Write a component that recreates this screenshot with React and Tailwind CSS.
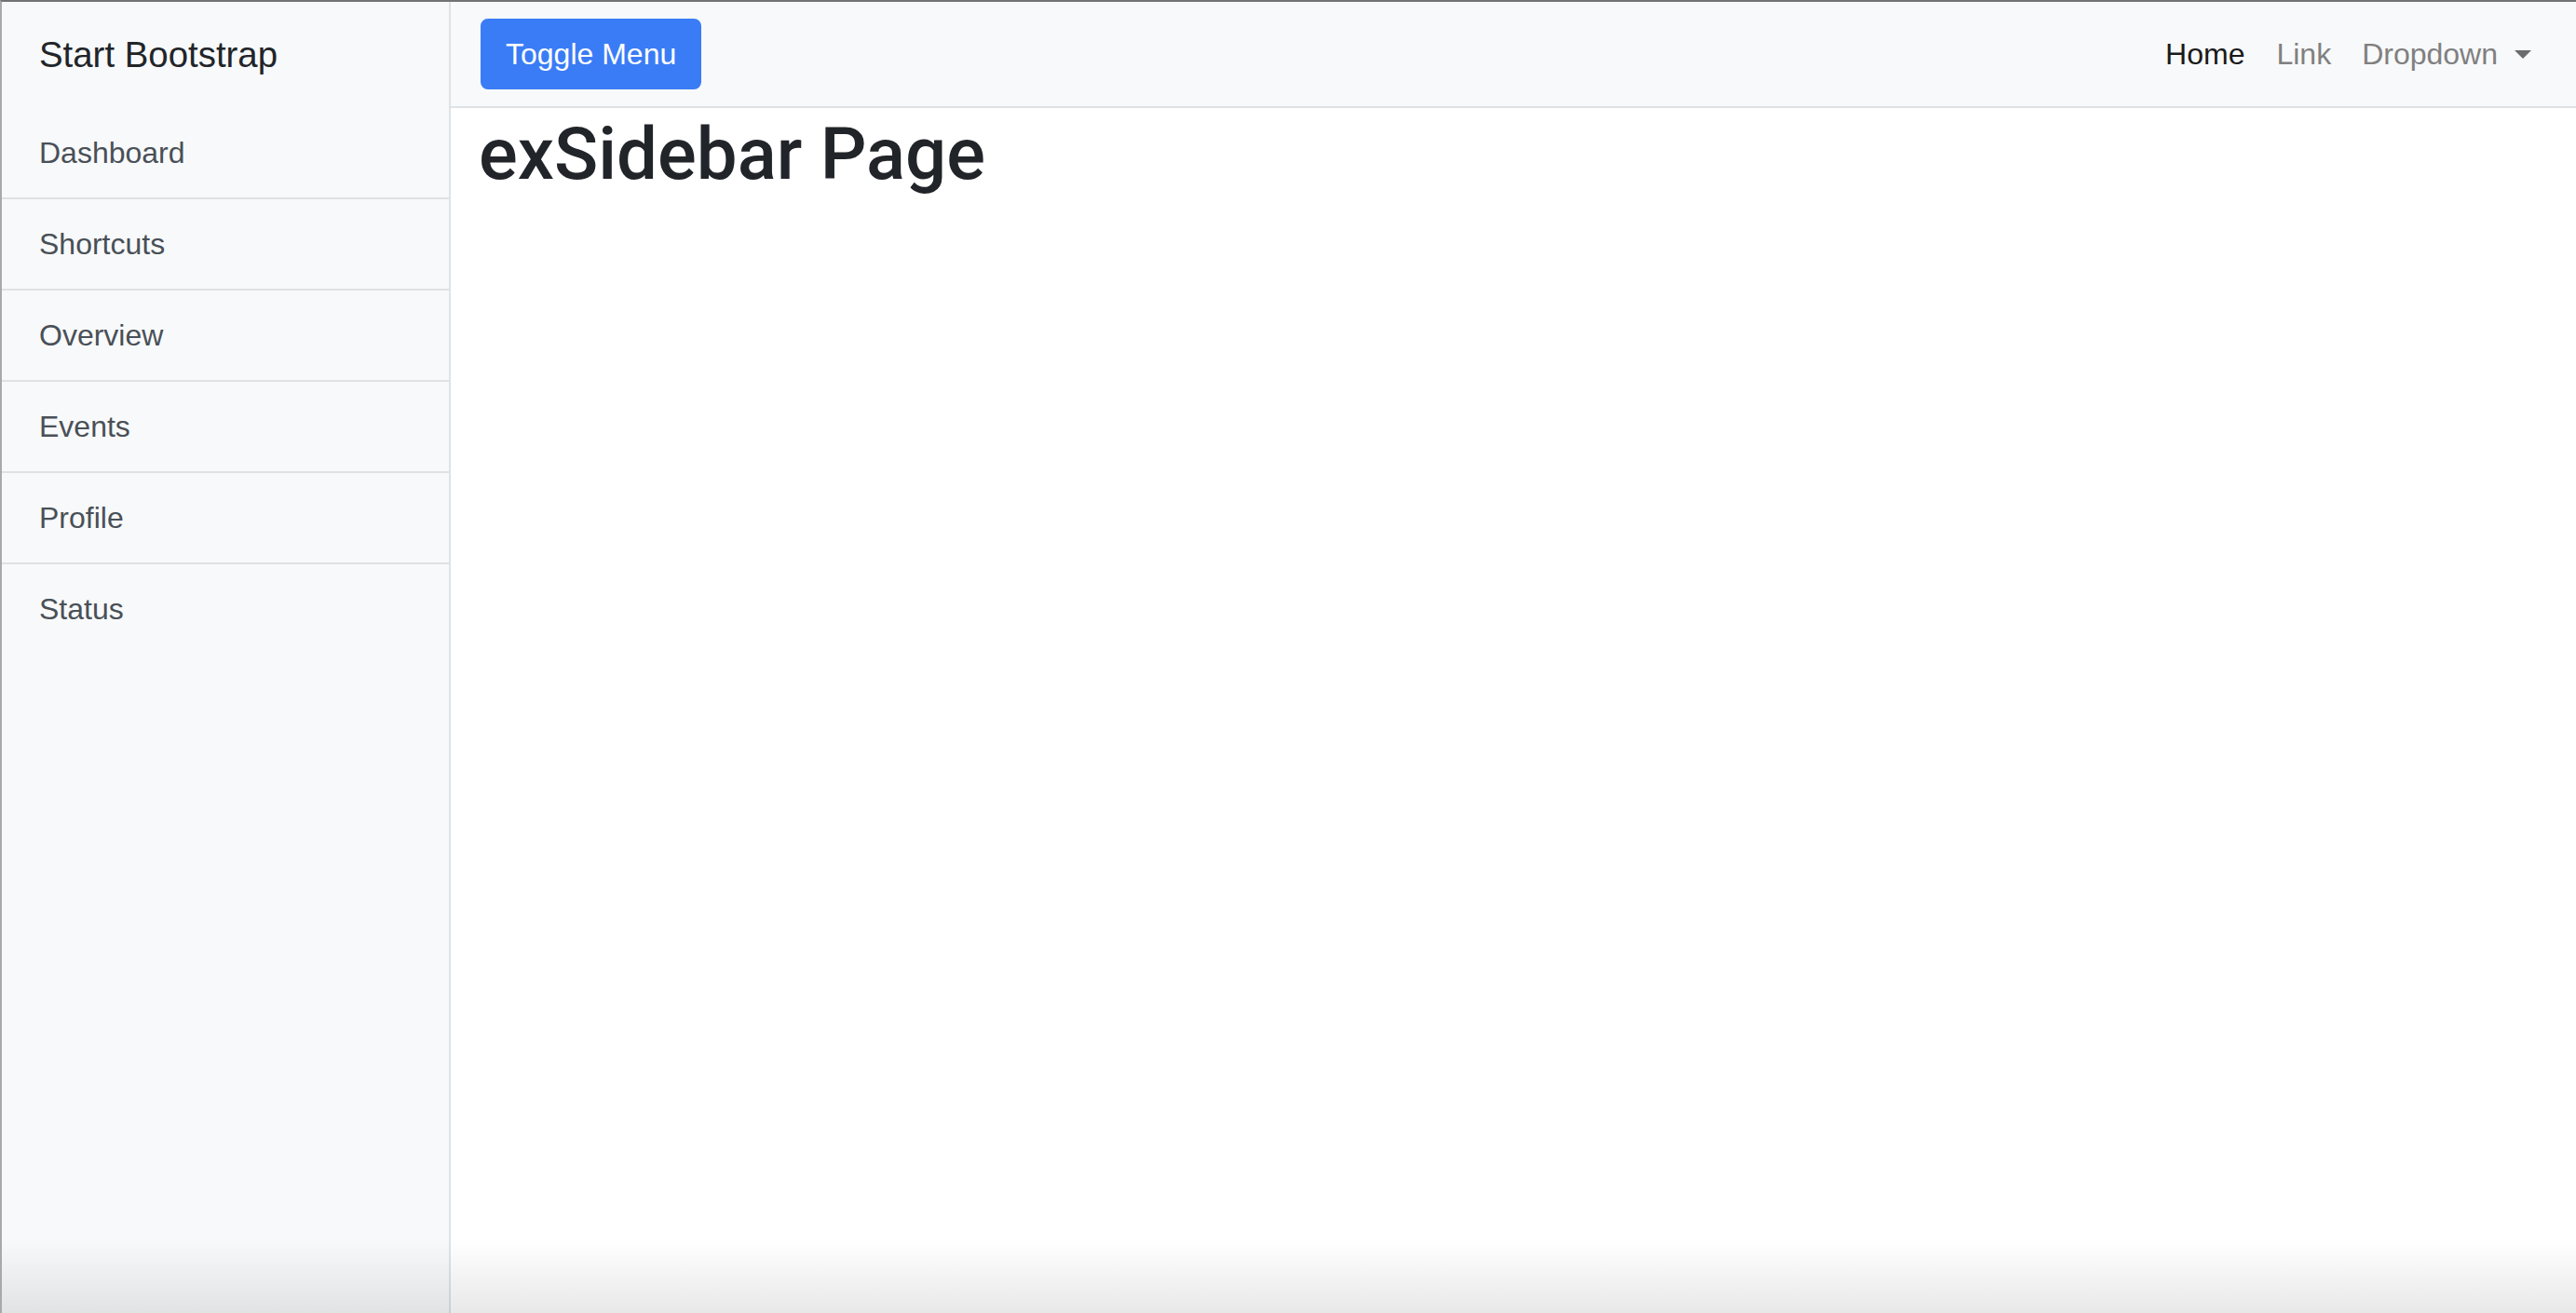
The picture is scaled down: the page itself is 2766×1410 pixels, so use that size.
export default function App() {
  const items = ["Dashboard", "Shortcuts", "Overview", "Events", "Profile", "Status"];
  return (
    <div
      className="relative flex h-[1410px] w-full overflow-hidden border-t-2 border-l-2 border-t-[#737373] border-l-[#a9a9a9] bg-white text-[#212529]"
      style={{ fontFamily: '"Liberation Sans", Arial, sans-serif' }}
    >
      <div className="flex w-[482px] shrink-0 flex-col border-r-2 border-[#dee2e6] bg-[#f8f9fa]">
        <div className="px-[40px] py-[28px] text-[38.4px] leading-[57.6px] text-[#212529]">Start Bootstrap</div>
        <div className="flex flex-col">
          {items.map((it, i) => (
            <div
              key={it}
              className={
                "px-[40px] py-[24px] text-[32px] leading-[48px] text-[#495057] " +
                (i < items.length - 1 ? "border-b-2 border-[#dee2e6]" : "")
              }
            >
              {it}
            </div>
          ))}
        </div>
      </div>
      <div className="flex min-w-0 flex-1 flex-col">
        <div className="flex items-center justify-between border-b-2 border-[#dee2e6] bg-[#f8f9fa] py-[16px] pl-[32px] pr-[32px]">
          <button className="rounded-[8px] border-2 border-[#3a7cf6] bg-[#3a7cf6] px-[25px] py-[12px] text-[32px] leading-[48px] text-white">
            Toggle Menu
          </button>
          <div className="flex items-center text-[32px] leading-[48px]">
            <span className="px-[17px] py-[16px] text-[#1a1a1a]">Home</span>
            <span className="px-[17px] py-[16px] text-[#808080]">Link</span>
            <span className="flex items-center px-[16px] py-[16px] text-[#808080]">
              Dropdown
              <span className="ml-[18px] inline-block h-0 w-0 border-x-[9.6px] border-t-[9.6px] border-x-transparent border-t-[#6c6c6c]"></span>
            </span>
          </div>
        </div>
        <div className="px-[30px]">
          <h1
            className="mt-[2px] text-[78px] font-medium leading-[96px] text-[#212529]"
            style={{ fontFamily: 'Roboto, "Liberation Sans", Arial, sans-serif' }}
          >
            exSidebar Page
          </h1>
        </div>
      </div>
      <div className="pointer-events-none absolute inset-x-0 bottom-0 h-[80px] bg-gradient-to-b from-transparent to-[rgba(0,0,0,0.09)]"></div>
    </div>
  );
}
